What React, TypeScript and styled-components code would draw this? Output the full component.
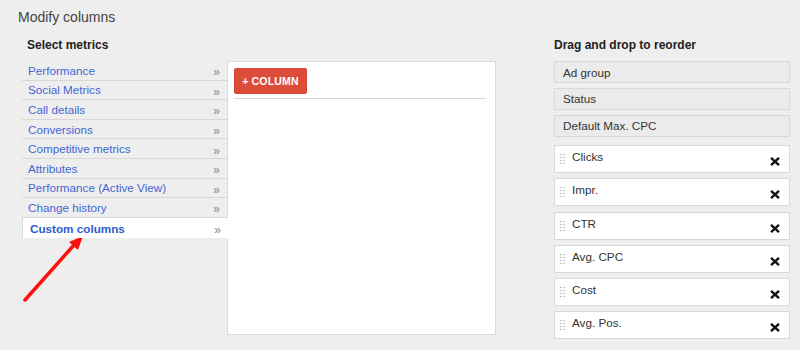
import React from 'react';
import styled, { createGlobalStyle } from 'styled-components';

const metrics = [
  'Performance',
  'Social Metrics',
  'Call details',
  'Conversions',
  'Competitive metrics',
  'Attributes',
  'Performance (Active View)',
  'Change history',
  'Custom columns',
];

const fixedColumns = ['Ad group', 'Status', 'Default Max. CPC'];
const movableColumns = ['Clicks', 'Impr.', 'CTR', 'Avg. CPC', 'Cost', 'Avg. Pos.'];

const GlobalStyle = createGlobalStyle`
  html, body {
    margin: 0;
    padding: 0;
    background: #eeeeee;
    font-family: Arial, "Liberation Sans", sans-serif;
  }
`;

const App = () => {
  return (
    <Page>
      <GlobalStyle />
      <Title>Modify columns</Title>
      <Body>
        <MetricsArea>
          <Heading $indent={5}>Select metrics</Heading>
          <MetricsRow>
            <MetricList>
              {metrics.map(name => (
                <MetricItem key={name} $active={name === 'Custom columns'}>
                  <span>{name}</span>
                  <Chevron>»</Chevron>
                </MetricItem>
              ))}
            </MetricList>
            <Panel>
              <AddButton>+ COLUMN</AddButton>
              <Divider />
            </Panel>
          </MetricsRow>
        </MetricsArea>
        <OrderArea>
          <Heading $indent={0}>Drag and drop to reorder</Heading>
          <FixedList>
            {fixedColumns.map(name => (
              <FixedBox key={name}>{name}</FixedBox>
            ))}
          </FixedList>
          <MovableList>
            {movableColumns.map(name => (
              <MovableBox key={name}>
                <Handle />
                <BoxLabel>{name}</BoxLabel>
                <RemoveIcon viewBox="0 0 10 9">
                  <path d="M1 0.8 L9 8.2 M9 0.8 L1 8.2" />
                </RemoveIcon>
              </MovableBox>
            ))}
          </MovableList>
        </OrderArea>
      </Body>
      <Arrow viewBox="0 0 70 70">
        <path d="M3 65 L52 10" />
        <polygon points="61,1 47,7 56,15" />
      </Arrow>
    </Page>
  );
};

const Page = styled.div`
  position: relative;
  width: 800px;
  height: 350px;
  box-sizing: border-box;
  padding: 9px 10px 0 18px;
  overflow: hidden;
`;

const Title = styled.div`
  font-size: 14px;
  line-height: 16px;
  color: #444444;
`;

const Body = styled.div`
  display: flex;
  gap: 58px;
  padding-left: 4px;
  margin-top: 13px;
`;

const MetricsArea = styled.div`
  display: flex;
  flex-direction: column;
  width: 474px;
`;

const Heading = styled.div<{ $indent: number }>`
  font-size: 12px;
  font-weight: bold;
  line-height: 14px;
  color: #222222;
  padding-left: ${props => props.$indent}px;
  margin-bottom: 9px;
`;

const MetricsRow = styled.div`
  display: flex;
`;

const MetricList = styled.div`
  width: 205px;
  display: flex;
  flex-direction: column;
`;

const MetricItem = styled.div<{ $active: boolean }>`
  box-sizing: border-box;
  height: ${props => (props.$active ? '20.6px' : '19.6px')};
  display: flex;
  align-items: center;
  justify-content: space-between;
  padding: 0 7px 0 ${props => (props.$active ? '7px' : '6px')};
  font-size: 11.7px;
  color: ${props => (props.$active ? '#2f5bcc' : '#4366d4')};
  font-weight: ${props => (props.$active ? 'bold' : 'normal')};
  background: ${props => (props.$active ? '#ffffff' : 'transparent')};
  border-bottom: ${props => (props.$active ? 'none' : '1px solid #d8d8d8')};
  border-left: ${props => (props.$active ? '1px solid #d8d8d8' : 'none')};
  margin-right: ${props => (props.$active ? '-1px' : '0')};
  position: relative;
  z-index: 1;
  cursor: pointer;
`;

const Chevron = styled.span`
  font-size: 12px;
  color: #8a8a8a;
  font-weight: normal;
  transform: translateY(1.5px);
`;

const Panel = styled.div`
  box-sizing: border-box;
  width: 269px;
  height: 274px;
  background: #ffffff;
  border: 1px solid #dcdcdc;
  padding: 6px 9px 0 6px;
`;

const AddButton = styled.button`
  display: block;
  width: 73px;
  height: 26px;
  padding: 0;
  border: 1px solid #d14836;
  border-radius: 2px;
  background: #dd4b39;
  color: #ffffff;
  font-family: Arial, "Liberation Sans", sans-serif;
  font-size: 10.5px;
  font-weight: bold;
  letter-spacing: 0.2px;
  cursor: pointer;
`;

const Divider = styled.div`
  height: 1px;
  background: #d8d8d8;
  margin-top: 4px;
`;

const OrderArea = styled.div`
  width: 236px;
  display: flex;
  flex-direction: column;
`;

const FixedList = styled.div`
  display: flex;
  flex-direction: column;
  gap: 4.8px;
`;

const FixedBox = styled.div`
  box-sizing: border-box;
  height: 22px;
  display: flex;
  align-items: center;
  padding-left: 8px;
  background: #ebebeb;
  border: 1px solid #d8d8d8;
  font-size: 11.7px;
  color: #333333;
`;

const MovableList = styled.div`
  display: flex;
  flex-direction: column;
  gap: 5.2px;
  margin-top: 8.6px;
`;

const MovableBox = styled.div`
  box-sizing: border-box;
  height: 28px;
  display: flex;
  align-items: flex-start;
  padding: 0 9px 0 4px;
  background: #ffffff;
  border: 1px solid #d8d8d8;
  cursor: move;
`;

const Handle = styled.span`
  width: 7px;
  height: 12px;
  margin-top: 7px;
  margin-right: 6px;
  background-image: radial-gradient(circle, #bdbdbd 1px, transparent 1.1px);
  background-size: 3.5px 3px;
  flex-shrink: 0;
`;

const BoxLabel = styled.span`
  flex: 1;
  font-size: 11.7px;
  line-height: 14px;
  margin-top: 4px;
  color: #333333;
`;

const RemoveIcon = styled.svg`
  width: 10px;
  height: 9px;
  margin-top: 11px;
  fill: none;
  stroke: #111111;
  stroke-width: 2.3;
`;

const Arrow = styled.svg`
  position: absolute;
  left: 22px;
  top: 235px;
  width: 70px;
  height: 70px;
  overflow: visible;
  path {
    stroke: #ff1010;
    stroke-width: 3.5;
    stroke-linecap: round;
    fill: none;
  }
  polygon {
    fill: #ff1010;
  }
`;

export default App;
